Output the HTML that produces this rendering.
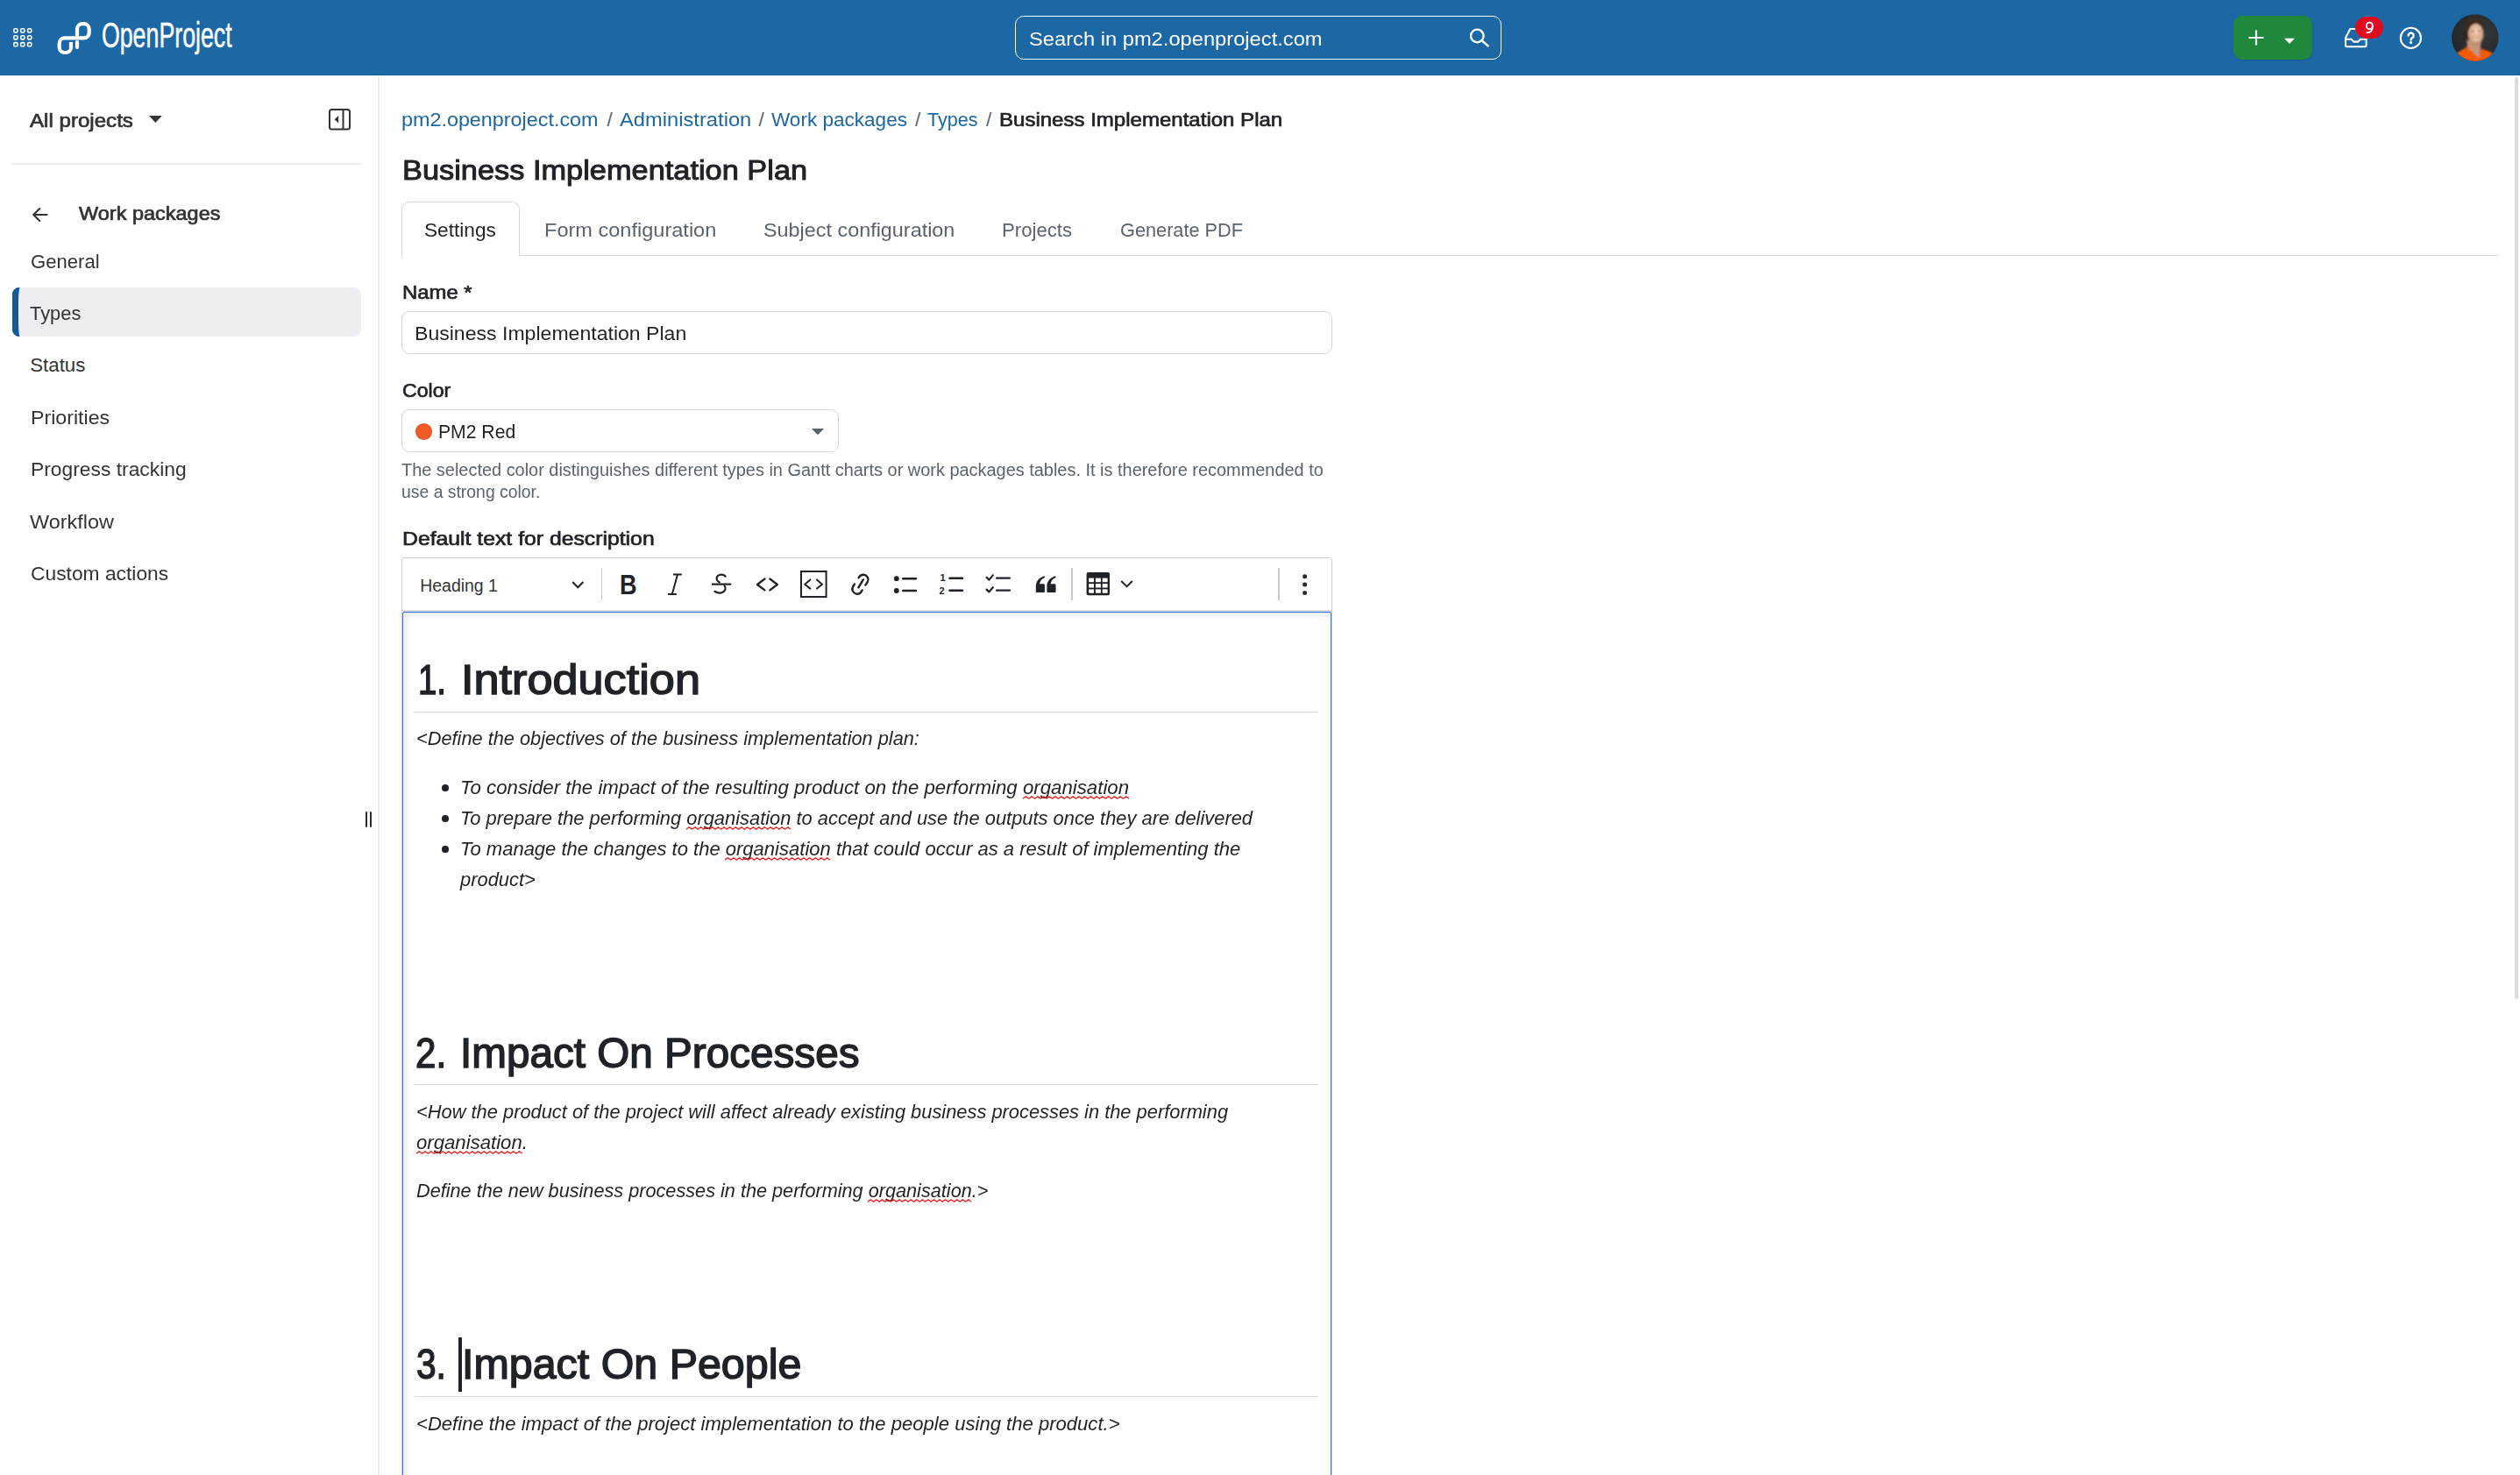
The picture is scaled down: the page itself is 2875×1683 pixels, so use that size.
<!DOCTYPE html><html><head><meta charset="utf-8"><title>OpenProject</title><style>html,body{margin:0;padding:0;width:2875px;height:1683px;overflow:hidden;background:#fff}body{position:relative;font-family:"Liberation Sans",sans-serif}.t{position:absolute;white-space:pre;line-height:1}svg{overflow:visible}</style></head><body><div style="position:absolute;left:0px;top:0px;width:2875px;height:86px;background:#1c68a5;box-shadow:0 0.6px 1.4px rgba(0,40,90,.35)"></div>
<div style="position:absolute;left:0px;top:85px;width:2875px;height:1px;background:#125c9c"></div>
<svg style="position:absolute;left:15px;top:32px;" width="23" height="23" viewBox="0 0 23 23"><rect x="0.8" y="0.8" width="4.2" height="4.2" rx="1.4" fill="none" stroke="#fff" stroke-width="1.6"/><rect x="0.8" y="8.7" width="4.2" height="4.2" rx="1.4" fill="none" stroke="#fff" stroke-width="1.6"/><rect x="0.8" y="16.6" width="4.2" height="4.2" rx="1.4" fill="none" stroke="#fff" stroke-width="1.6"/><rect x="8.7" y="0.8" width="4.2" height="4.2" rx="1.4" fill="none" stroke="#fff" stroke-width="1.6"/><rect x="8.7" y="8.7" width="4.2" height="4.2" rx="1.4" fill="none" stroke="#fff" stroke-width="1.6"/><rect x="8.7" y="16.6" width="4.2" height="4.2" rx="1.4" fill="none" stroke="#fff" stroke-width="1.6"/><rect x="16.6" y="0.8" width="4.2" height="4.2" rx="1.4" fill="none" stroke="#fff" stroke-width="1.6"/><rect x="16.6" y="8.7" width="4.2" height="4.2" rx="1.4" fill="none" stroke="#fff" stroke-width="1.6"/><rect x="16.6" y="16.6" width="4.2" height="4.2" rx="1.4" fill="none" stroke="#fff" stroke-width="1.6"/></svg>
<svg style="position:absolute;left:60px;top:20px;" width="50" height="50" viewBox="0 0 50 50"><g fill="none" stroke="#fff" stroke-width="4.2" stroke-linecap="butt" stroke-linejoin="round"><path d="M21 28 V34 A6 6 0 0 1 15 40 H13.7 A6 6 0 0 1 7.7 34 V29.4 A6 6 0 0 1 13.7 23.4 H35.7 A6 6 0 0 0 41.7 17.4 V13.2 A6 6 0 0 0 35.7 7.2 H34 A6 6 0 0 0 28 13.2 V23.4"/></g><path d="M28 28 V34" stroke="#fff" stroke-width="4.2" stroke-linecap="round"/></svg>
<svg style="position:absolute;left:110px;top:15px;" width="170" height="55" viewBox="0 0 170 55"><text x="5.9" y="39.2" font-family="Liberation Sans" font-size="41.5" fill="#fff" stroke="#fff" stroke-width="0.5" textLength="148.8" lengthAdjust="spacingAndGlyphs">OpenProject</text></svg>
<div style="position:absolute;left:1157.5px;top:18px;width:555px;height:49.5px;box-sizing:border-box;border:1.5px solid #fff;border-radius:10px"></div>
<div class="t" style="left:1174.4px;top:33.7px;font-size:22.39px;font-weight:400;font-style:normal;color:#fff;transform:scaleX(1.0591);transform-origin:0 0;">Search in pm2.openproject.com</div>
<svg style="position:absolute;left:1672px;top:28px;" width="32" height="30" viewBox="0 0 32 30"><circle cx="13.3" cy="13" r="7.3" fill="none" stroke="#fff" stroke-width="2.3"/><path d="M18.6 18.2 L25.6 24.4" stroke="#fff" stroke-width="2.5" stroke-linecap="round"/></svg>
<div style="position:absolute;left:2548.4px;top:18.2px;width:89.2px;height:49.5px;background:#1f883d;border-radius:10px;box-shadow:0 1px 2px rgba(0,0,0,.15)"></div>
<svg style="position:absolute;left:2564px;top:33px;" width="20" height="20" viewBox="0 0 20 20"><path d="M10 1.5 V18.5 M1.5 10 H18.5" stroke="#fff" stroke-width="2.2"/></svg>
<svg style="position:absolute;left:2605px;top:43px;" width="14" height="8" viewBox="0 0 14 8"><path d="M1 0.8 H13 L7 7 Z" fill="#fff"/></svg>
<svg style="position:absolute;left:2673px;top:30px;" width="32" height="27" viewBox="0 0 32 27"><g fill="none" stroke="#fff" stroke-width="2.1" stroke-linejoin="round"><path d="M8.2 3 H21 L26.6 13.2 V22 A1.3 1.3 0 0 1 25.3 23.3 H4.3 A1.3 1.3 0 0 1 3 22 V13.2 Z"/><path d="M3 14.8 H9.6 L12.2 17.6 H17.4 L20 14.8 H26.6"/></g></svg>
<div style="position:absolute;left:2686.8px;top:18.8px;width:32.6px;height:25.3px;background:#e00b1f;border-radius:13px"></div>
<svg style="position:absolute;left:2696px;top:23px;" width="14" height="18" viewBox="0 0 14 18"><ellipse cx="7.3" cy="6.4" rx="3.5" ry="3.8" fill="none" stroke="#fff" stroke-width="1.9"/><path d="M10.8 6.6 C10.9 11.8 9.2 14.3 3.6 14.4" fill="none" stroke="#fff" stroke-width="1.9"/></svg>
<svg style="position:absolute;left:2736px;top:29px;" width="29" height="29" viewBox="0 0 29 29"><circle cx="14.4" cy="14.4" r="11.6" fill="none" stroke="#fff" stroke-width="2.1"/><path d="M11.6 11.6 A3 3 0 1 1 16.2 14.1 C15 14.8 14.5 15.3 14.5 16.6" fill="none" stroke="#fff" stroke-width="2.4" stroke-linecap="round"/><circle cx="14.5" cy="19.6" r="1.6" fill="#fff"/></svg>
<svg style="position:absolute;left:2790px;top:10px;" width="70" height="66" viewBox="0 0 70 66"><defs><clipPath id="avc"><circle cx="33.8" cy="43.1" r="26.8" transform="translate(0,-10)"/></clipPath><radialGradient id="avbg" cx="0.6" cy="0.4" r="0.7"><stop offset="0" stop-color="#34373a"/><stop offset="1" stop-color="#1f2124"/></radialGradient><radialGradient id="avface" cx="0.5" cy="0.35" r="0.65"><stop offset="0" stop-color="#f0cdb8"/><stop offset="0.6" stop-color="#dcaa8c"/><stop offset="1" stop-color="#b98468"/></radialGradient><filter id="avbl" x="-20%" y="-20%" width="140%" height="140%"><feGaussianBlur stdDeviation="1"/></filter></defs><g clip-path="url(#avc)"><rect width="70" height="66" fill="url(#avbg)"/><g filter="url(#avbl)"><ellipse cx="32.6" cy="22.5" rx="11.4" ry="13" fill="#3a2a21"/><path d="M22 24 Q21 32 25 36 L27 30 Z" fill="#2e221c"/><path d="M24.5 36 L25 55 L39 56 L40.5 36 Z" fill="#c8957a"/><ellipse cx="34.6" cy="29.4" rx="8.8" ry="12.4" fill="url(#avface)"/><path d="M26 19 Q34 13.5 43 20.5 L43 14 Q34 7.5 24.5 13 Z" fill="#3a2a21"/><path d="M29.5 25.6 h3 M37 25.2 h3" stroke="#7a5a4e" stroke-width="1.1"/><path d="M31.5 35.2 Q35 36.8 38.5 35" stroke="#eadbd0" stroke-width="1.3" fill="none"/><path d="M3 64 L13 50.5 L24.5 43.5 L38.6 56.5 L40.5 45.5 L53 50 L64 62 L64 70 L3 70 Z" fill="#f25a06"/></g></g></svg>
<div style="position:absolute;left:2869.2px;top:88px;width:3.8px;height:1052px;background:#dadada;border-radius:2px"></div>
<div style="position:absolute;left:431px;top:86px;width:1.5px;height:1597px;background:#ebebeb"></div>
<div class="t" style="left:33.9px;top:126.8px;font-size:22.29px;font-weight:400;font-style:normal;color:#333333;transform:scaleX(1.0819);transform-origin:0 0;-webkit-text-stroke:0.71px #333333;">All projects</div>
<svg style="position:absolute;left:168px;top:130px;" width="19" height="12" viewBox="0 0 19 12"><path d="M2 2 H16.8 L9.4 10 Z" fill="#333"/></svg>
<svg style="position:absolute;left:373px;top:122px;" width="28" height="28" viewBox="0 0 28 28"><g fill="none" stroke="#333" stroke-width="2"><rect x="3" y="3" width="23" height="22.5" rx="2.5"/><path d="M18.5 3 V25.5"/></g><path d="M13.2 10 V18.6 L8.6 14.3 Z" fill="#333"/></svg>
<div style="position:absolute;left:14px;top:186px;width:398px;height:2px;background:#e8ebef"></div>
<svg style="position:absolute;left:34px;top:234px;" width="24" height="22" viewBox="0 0 24 22"><g fill="none" stroke="#333" stroke-width="2.1" stroke-linecap="round" stroke-linejoin="round"><path d="M19.5 11 H4.5 M11.3 4 L4.2 11 L11.3 18"/></g></svg>
<div class="t" style="left:90.2px;top:232.5px;font-size:22.29px;font-weight:400;font-style:normal;color:#333333;transform:scaleX(1.0541);transform-origin:0 0;-webkit-text-stroke:0.71px #333333;">Work packages</div>
<div style="position:absolute;left:14px;top:328px;width:398px;height:56px;background:#eceef1;border-radius:8px"></div>
<svg style="position:absolute;left:13px;top:328px;" width="12" height="56" viewBox="0 0 12 56"><path d="M9.6 0 C8.3 4 8 10 8 28 C8 46 8.3 52 9.6 56 H8.6 A7.6 7.6 0 0 1 1 48.4 V7.6 A7.6 7.6 0 0 1 8.6 0 Z" fill="#175a8f"/></svg>
<div class="t" style="left:34.5px;top:287.7px;font-size:22.29px;font-weight:400;font-style:normal;color:#333333;transform:scaleX(0.9920);transform-origin:0 0;">General</div>
<div class="t" style="left:34.2px;top:346.6px;font-size:22.29px;font-weight:400;font-style:normal;color:#333333;transform:scaleX(0.9815);transform-origin:0 0;">Types</div>
<div class="t" style="left:34.2px;top:406.0px;font-size:22.29px;font-weight:400;font-style:normal;color:#333333;">Status</div>
<div class="t" style="left:34.9px;top:465.8px;font-size:22.29px;font-weight:400;font-style:normal;color:#333333;transform:scaleX(1.0405);transform-origin:0 0;">Priorities</div>
<div class="t" style="left:34.9px;top:524.9px;font-size:22.29px;font-weight:400;font-style:normal;color:#333333;transform:scaleX(1.0249);transform-origin:0 0;">Progress tracking</div>
<div class="t" style="left:34.4px;top:585.0px;font-size:22.29px;font-weight:400;font-style:normal;color:#333333;transform:scaleX(1.0519);transform-origin:0 0;">Workflow</div>
<div class="t" style="left:34.6px;top:643.6px;font-size:22.29px;font-weight:400;font-style:normal;color:#333333;transform:scaleX(1.0238);transform-origin:0 0;">Custom actions</div>
<div style="position:absolute;left:417px;top:926px;width:2.2px;height:18px;background:#2b2b2b;border-radius:1px"></div>
<div style="position:absolute;left:421.8px;top:926px;width:2.2px;height:18px;background:#2b2b2b;border-radius:1px"></div>
<div class="t" style="left:458.3px;top:125.8px;font-size:22.08px;font-weight:400;font-style:normal;color:#1a67a3;transform:scaleX(1.0574);transform-origin:0 0;">pm2.openproject.com</div>
<div class="t" style="left:692.5px;top:125.5px;font-size:22.50px;font-weight:400;font-style:normal;color:#59636e;">/</div>
<div class="t" style="left:706.5px;top:125.8px;font-size:22.08px;font-weight:400;font-style:normal;color:#1a67a3;transform:scaleX(1.0745);transform-origin:0 0;">Administration</div>
<div class="t" style="left:865.5px;top:125.5px;font-size:22.50px;font-weight:400;font-style:normal;color:#59636e;">/</div>
<div class="t" style="left:879.6px;top:125.8px;font-size:22.08px;font-weight:400;font-style:normal;color:#1a67a3;transform:scaleX(1.0211);transform-origin:0 0;">Work packages</div>
<div class="t" style="left:1044.0px;top:125.5px;font-size:22.50px;font-weight:400;font-style:normal;color:#59636e;">/</div>
<div class="t" style="left:1058.3px;top:125.8px;font-size:22.08px;font-weight:400;font-style:normal;color:#1a67a3;transform:scaleX(0.9770);transform-origin:0 0;">Types</div>
<div class="t" style="left:1125.0px;top:125.5px;font-size:22.50px;font-weight:400;font-style:normal;color:#59636e;">/</div>
<div class="t" style="left:1140.0px;top:125.8px;font-size:22.08px;font-weight:400;font-style:normal;color:#1f2328;transform:scaleX(1.0883);transform-origin:0 0;-webkit-text-stroke:0.71px #1f2328;">Business Implementation Plan</div>
<div class="t" style="left:459.2px;top:178.3px;font-size:32.25px;font-weight:400;font-style:normal;color:#1f2328;transform:scaleX(1.0652);transform-origin:0 0;-webkit-text-stroke:1.03px #1f2328;">Business Implementation Plan</div>
<div style="position:absolute;left:457.5px;top:290.5px;width:2392px;height:1.5px;background:#d1d9e0"></div>
<div style="position:absolute;left:457.5px;top:230.4px;width:135.5px;height:62px;box-sizing:border-box;border:1.5px solid #d1d9e0;border-bottom:none;border-radius:9px 9px 0 0;background:#fff"></div>
<div class="t" style="left:484.4px;top:252.0px;font-size:22.29px;font-weight:400;font-style:normal;color:#1f2328;transform:scaleX(1.0166);transform-origin:0 0;">Settings</div>
<div class="t" style="left:620.7px;top:252.0px;font-size:22.29px;font-weight:400;font-style:normal;color:#59636e;transform:scaleX(1.0568);transform-origin:0 0;">Form configuration</div>
<div class="t" style="left:870.5px;top:252.0px;font-size:22.29px;font-weight:400;font-style:normal;color:#59636e;transform:scaleX(1.0492);transform-origin:0 0;">Subject configuration</div>
<div class="t" style="left:1143.3px;top:252.0px;font-size:22.29px;font-weight:400;font-style:normal;color:#59636e;transform:scaleX(0.9944);transform-origin:0 0;">Projects</div>
<div class="t" style="left:1277.8px;top:252.0px;font-size:22.29px;font-weight:400;font-style:normal;color:#59636e;transform:scaleX(0.9747);transform-origin:0 0;">Generate PDF</div>
<div class="t" style="left:458.6px;top:322.7px;font-size:22.59px;font-weight:400;font-style:normal;color:#1f2328;transform:scaleX(1.0577);transform-origin:0 0;-webkit-text-stroke:0.72px #1f2328;">Name *</div>
<div style="position:absolute;left:457.5px;top:354.6px;width:1062.5px;height:49.7px;box-sizing:border-box;border:1.5px solid #d1d9e0;border-radius:9px;background:#fff"></div>
<div class="t" style="left:472.6px;top:369.5px;font-size:22.29px;font-weight:400;font-style:normal;color:#1f2328;transform:scaleX(1.0352);transform-origin:0 0;">Business Implementation Plan</div>
<div class="t" style="left:458.6px;top:434.5px;font-size:22.59px;font-weight:400;font-style:normal;color:#1f2328;transform:scaleX(1.0222);transform-origin:0 0;-webkit-text-stroke:0.72px #1f2328;">Color</div>
<div style="position:absolute;left:457.5px;top:467.3px;width:499.5px;height:49.2px;box-sizing:border-box;border:1.5px solid #d1d9e0;border-radius:9px;background:#fff"></div>
<div style="position:absolute;left:474.3px;top:483.2px;width:18.8px;height:18.8px;background:#f05a24;border-radius:50%;box-shadow:inset 0 0 0 1px rgba(0,0,0,.08)"></div>
<div class="t" style="left:500.4px;top:481.6px;font-size:22.29px;font-weight:400;font-style:normal;color:#1f2328;transform:scaleX(0.9491);transform-origin:0 0;">PM2 Red</div>
<svg style="position:absolute;left:924px;top:487px;" width="18" height="11" viewBox="0 0 18 11"><path d="M1.8 2 H16.2 L9 9.2 Z" fill="#59636e"/></svg>
<div class="t" style="left:458.2px;top:526.3px;font-size:20.13px;font-weight:400;font-style:normal;color:#59636e;transform:scaleX(0.9909);transform-origin:0 0;">The selected color distinguishes different types in Gantt charts or work packages tables. It is therefore recommended to</div>
<div class="t" style="left:458.2px;top:551.2px;font-size:20.13px;font-weight:400;font-style:normal;color:#59636e;transform:scaleX(0.9638);transform-origin:0 0;">use a strong color.</div>
<div class="t" style="left:458.6px;top:603.6px;font-size:22.59px;font-weight:400;font-style:normal;color:#1f2328;transform:scaleX(1.0967);transform-origin:0 0;-webkit-text-stroke:0.72px #1f2328;">Default text for description</div>
<div style="position:absolute;left:457.6px;top:636.2px;width:1062.4px;height:1100px;box-sizing:border-box;border:1.3px solid #c9ccd1;border-radius:3px 3px 0 0;background:#fff"></div>
<div style="position:absolute;left:458.8px;top:696.2px;width:1060px;height:1.8px;background:linear-gradient(#e2e2e2,#c8ccd2)"></div>
<div class="t" style="left:479.3px;top:658.9px;font-size:19.43px;font-weight:400;font-style:normal;color:#333;">Heading 1</div>
<svg style="position:absolute;left:650px;top:660px;" width="19" height="14" viewBox="0 0 19 14"><path d="M3.2 4 L9.3 10.2 L15.4 4" fill="none" stroke="#1f2328" stroke-width="2"/></svg>
<div style="position:absolute;left:685.8px;top:648.3px;width:1.5px;height:36.3px;background:#c8c8c8"></div>
<svg style="position:absolute;left:704px;top:652px;" width="26" height="30" viewBox="0 0 26 30"><text x="2.9" y="26" font-family="Liberation Sans" font-weight="700" font-size="32" fill="#1f2328" textLength="19.6" lengthAdjust="spacingAndGlyphs">B</text></svg>
<svg style="position:absolute;left:758px;top:652px;" width="24" height="30" viewBox="0 0 24 30"><g stroke="#1f2328" stroke-width="2" fill="none"><path d="M10 3.6 H19.8 M4 26 H13.8 M15 3.6 L8.8 26"/></g></svg>
<svg style="position:absolute;left:810px;top:652px;" width="28" height="30" viewBox="0 0 28 30"><g fill="none" stroke="#1f2328" stroke-width="2.2" stroke-linecap="round"><path d="M17.6 5.6 C15.8 3.8 13 3.3 10.8 4 C8 4.8 7 7.4 8 9.6 C8.6 11 9.6 11.8 10.8 12.5"/><path d="M16.6 16.4 C17.8 18 17.8 20.8 16.2 22.6 C14 25 9.6 25.4 5.4 22.8"/></g><path d="M2 14.6 H24.2" stroke="#1f2328" stroke-width="2.2"/></svg>
<svg style="position:absolute;left:860px;top:656px;" width="30" height="22" viewBox="0 0 30 22"><g fill="none" stroke="#1f2328" stroke-width="2.2" stroke-linecap="round" stroke-linejoin="round"><path d="M12.5 4.5 L3.9 11 L12.5 17.4 M18.3 4.5 L26.9 11 L18.3 17.4"/></g></svg>
<svg style="position:absolute;left:911px;top:649px;" width="35" height="35" viewBox="0 0 35 35"><rect x="3" y="3" width="28.6" height="29" fill="none" stroke="#1f2328" stroke-width="2"/><g fill="none" stroke="#1f2328" stroke-width="2" stroke-linecap="round" stroke-linejoin="round"><path d="M13.4 12.4 L7.2 17.7 L13.4 22.6 M21 12.4 L27 17.7 L21 22.6"/></g></svg>
<svg style="position:absolute;left:967px;top:651px;" width="30" height="31" viewBox="0 0 30 31"><g fill="none" stroke="#1f2328" stroke-width="2.4" stroke-linecap="round"><path d="M12.6 8.2 C13.8 6 15.8 4.6 18.6 4.8 C22.6 5.4 24.6 9.6 22.8 13 L20.4 16.6"/><path d="M16.6 22.4 C15.2 25.6 12.6 27 10 26.6 C6 25.8 4.2 21.6 6.2 18.2 L8 15.4"/><path d="M17.8 10.4 L12.4 19.4"/></g></svg>
<svg style="position:absolute;left:1017px;top:652px;" width="32" height="28" viewBox="0 0 32 28"><circle cx="5.8" cy="8.2" r="2.9" fill="#1f2328"/><circle cx="5.8" cy="22" r="2.9" fill="#1f2328"/><g stroke="#1f2328" stroke-width="2.4" stroke-linecap="round"><path d="M13.2 8.2 H28"/><path d="M13.2 22 H28"/></g></svg>
<svg style="position:absolute;left:1070px;top:652px;" width="32" height="30" viewBox="0 0 32 30"><text x="2.6" y="11" font-family="Liberation Sans" font-weight="700" font-size="11" fill="#1f2328">1</text><text x="1.6" y="26.4" font-family="Liberation Sans" font-weight="700" font-size="11" fill="#1f2328">2</text><g stroke="#1f2328" stroke-width="2.4" stroke-linecap="round"><path d="M13.4 7.8 H28"/><path d="M13.4 21.8 H28"/></g></svg>
<svg style="position:absolute;left:1122px;top:652px;" width="34" height="28" viewBox="0 0 34 28"><g fill="none" stroke="#1f2328" stroke-width="2.2" stroke-linecap="round" stroke-linejoin="round"><path d="M3.6 6.8 L6.4 9.6 L10.8 4.4"/><path d="M3.6 20.6 L6.4 23.4 L10.8 18.2"/><path d="M15 7.6 H30"/><path d="M15 21.6 H30"/></g></svg>
<svg style="position:absolute;left:1179px;top:654px;" width="28" height="26" viewBox="0 0 28 26"><path d="M12.9 3.2 C7.6 4.3 2.8 8.6 2.8 14.6 V20.9 A1.2 1.2 0 0 0 4 22.1 H11.7 A1.2 1.2 0 0 0 12.9 20.9 V13.5 A1.2 1.2 0 0 0 11.7 12.3 H7 C7.5 9 9.6 6.2 12.9 5 Z M25.5 3.2 C20.2 4.3 15.4 8.6 15.4 14.6 V20.9 A1.2 1.2 0 0 0 16.6 22.1 H24.3 A1.2 1.2 0 0 0 25.5 20.9 V13.5 A1.2 1.2 0 0 0 24.3 12.3 H19.6 C20.1 9 22.2 6.2 25.5 5 Z" fill="#1f2328"/></svg>
<div style="position:absolute;left:1222.3px;top:647.7px;width:1.5px;height:37.2px;background:#c8c8c8"></div>
<svg style="position:absolute;left:1237px;top:651px;" width="32" height="31" viewBox="0 0 32 31"><rect x="2.6" y="2" width="26.4" height="26.2" rx="2" fill="#1f2328"/><g fill="#fff"><rect x="5.2" y="8.6" width="5.8" height="4.6"/><rect x="12.9" y="8.6" width="6" height="4.6"/><rect x="20.7" y="8.6" width="5.9" height="4.6"/><rect x="5.2" y="15.1" width="5.8" height="4.4"/><rect x="12.9" y="15.1" width="6" height="4.4"/><rect x="20.7" y="15.1" width="5.9" height="4.4"/><rect x="5.2" y="21.4" width="5.8" height="4.3"/><rect x="12.9" y="21.4" width="6" height="4.3"/><rect x="20.7" y="21.4" width="5.9" height="4.3"/></g></svg>
<svg style="position:absolute;left:1276px;top:659px;" width="19" height="14" viewBox="0 0 19 14"><path d="M3.2 4 L9.6 10.2 L15.8 4" fill="none" stroke="#1f2328" stroke-width="2"/></svg>
<div style="position:absolute;left:1458.2px;top:647.6px;width:1.5px;height:37.4px;background:#c8c8c8"></div>
<svg style="position:absolute;left:1482px;top:652px;" width="12" height="30" viewBox="0 0 12 30"><circle cx="6.6" cy="5.8" r="2.5" fill="#2b2b2b"/><circle cx="6.6" cy="15.1" r="2.5" fill="#2b2b2b"/><circle cx="6.6" cy="24.5" r="2.5" fill="#2b2b2b"/></svg>
<div style="position:absolute;left:459px;top:697.8px;width:1060px;height:1100px;box-sizing:border-box;border:1.5px solid #3377e8;border-radius:2px 2px 0 0;background:#fff;box-shadow:inset 3px 3px 8px rgba(0,0,0,.1)"></div>
<div class="t" style="left:476.7px;top:751.7px;font-size:47.86px;font-weight:400;font-style:normal;color:#1f2328;transform:scaleX(0.8008);transform-origin:0 0;-webkit-text-stroke:1.53px #1f2328;">1.</div>
<div class="t" style="left:525.5px;top:751.7px;font-size:47.86px;font-weight:400;font-style:normal;color:#1f2328;transform:scaleX(1.0913);transform-origin:0 0;-webkit-text-stroke:1.53px #1f2328;">Introduction</div>
<div style="position:absolute;left:473px;top:811.7px;width:1031px;height:1.2px;background:#d3dae1"></div>
<div class="t" style="left:474.6px;top:831.8px;font-size:22.39px;font-weight:400;font-style:italic;color:#1f2328;transform:scaleX(0.9724);transform-origin:0 0;">&lt;Define the objectives of the business implementation plan:</div>
<div style="position:absolute;left:504.4px;top:895.2px;width:7.7px;height:7.7px;background:#1f2328;border-radius:50%"></div>
<div style="position:absolute;left:504.4px;top:930.3000000000001px;width:7.7px;height:7.7px;background:#1f2328;border-radius:50%"></div>
<div style="position:absolute;left:504.4px;top:965.4px;width:7.7px;height:7.7px;background:#1f2328;border-radius:50%"></div>
<div class="t" style="left:524.6px;top:887.7px;font-size:22.39px;font-weight:400;font-style:italic;color:#1f2328;transform:scaleX(0.9938);transform-origin:0 0;">To consider the impact of the resulting product on the performing <span class="org">organisation</span></div>
<div class="t" style="left:524.6px;top:922.9px;font-size:22.39px;font-weight:400;font-style:italic;color:#1f2328;transform:scaleX(0.9777);transform-origin:0 0;">To prepare the performing <span class="org">organisation</span> to accept and use the outputs once they are delivered</div>
<div class="t" style="left:524.6px;top:958.1px;font-size:22.39px;font-weight:400;font-style:italic;color:#1f2328;transform:scaleX(0.9841);transform-origin:0 0;">To manage the changes to the <span class="org">organisation</span> that could occur as a result of implementing the</div>
<div class="t" style="left:525.1px;top:992.5px;font-size:22.39px;font-weight:400;font-style:italic;color:#1f2328;transform:scaleX(0.9782);transform-origin:0 0;">product&gt;</div>
<div class="t" style="left:474.2px;top:1177.9px;font-size:47.86px;font-weight:400;font-style:normal;color:#1f2328;transform:scaleX(0.8783);transform-origin:0 0;-webkit-text-stroke:1.53px #1f2328;">2.</div>
<div class="t" style="left:525.0px;top:1177.9px;font-size:47.86px;font-weight:400;font-style:normal;color:#1f2328;transform:scaleX(0.9956);transform-origin:0 0;-webkit-text-stroke:1.53px #1f2328;">Impact On Processes</div>
<div style="position:absolute;left:473px;top:1237.2px;width:1031px;height:1.2px;background:#d3dae1"></div>
<div class="t" style="left:474.6px;top:1257.7px;font-size:22.39px;font-weight:400;font-style:italic;color:#1f2328;transform:scaleX(0.9765);transform-origin:0 0;">&lt;How the product of the project will affect already existing business processes in the performing</div>
<div class="t" style="left:474.6px;top:1292.9px;font-size:22.39px;font-weight:400;font-style:italic;color:#1f2328;transform:scaleX(0.9908);transform-origin:0 0;"><span class="org">organisation</span>.</div>
<div class="t" style="left:474.6px;top:1348.3px;font-size:22.39px;font-weight:400;font-style:italic;color:#1f2328;transform:scaleX(0.9687);transform-origin:0 0;">Define the new business processes in the performing <span class="org">organisation</span>.&gt;</div>
<div class="t" style="left:474.9px;top:1533.0px;font-size:47.86px;font-weight:400;font-style:normal;color:#1f2328;transform:scaleX(0.8483);transform-origin:0 0;-webkit-text-stroke:1.53px #1f2328;">3.</div>
<div class="t" style="left:526.5px;top:1533.0px;font-size:47.86px;font-weight:400;font-style:normal;color:#1f2328;transform:scaleX(1.0110);transform-origin:0 0;-webkit-text-stroke:1.53px #1f2328;">Impact On People</div>
<div style="position:absolute;left:473px;top:1592.9px;width:1031px;height:1.2px;background:#d3dae1"></div>
<div style="position:absolute;left:523.1px;top:1526px;width:3.8px;height:61.6px;background:#1f2328"></div>
<div class="t" style="left:474.6px;top:1613.9px;font-size:22.39px;font-weight:400;font-style:italic;color:#1f2328;transform:scaleX(0.9866);transform-origin:0 0;">&lt;Define the impact of the project implementation to the people using the product.&gt;</div>
<svg style="position:absolute;left:1166.5px;top:906.8px" width="123.2" height="6"><path d="M0 0 L3.37 -2.40 L6.73 0 L10.10 -2.40 L13.46 0 L16.83 -2.40 L20.19 0 L23.56 -2.40 L26.92 0 L30.29 -2.40 L33.65 0 L37.02 -2.40 L40.38 0 L43.75 -2.40 L47.11 0 L50.48 -2.40 L53.84 0 L57.21 -2.40 L60.58 0 L63.94 -2.40 L67.31 0 L70.67 -2.40 L74.04 0 L77.40 -2.40 L80.77 0 L84.13 -2.40 L87.50 0 L90.86 -2.40 L94.23 0 L97.59 -2.40 L100.96 0 L104.32 -2.40 L107.69 0 L111.05 -2.40 L114.42 0 L117.79 -2.40 L121.15 0" transform="translate(0,4.2)" fill="none" stroke="#ee1111" stroke-width="1.2" stroke-linejoin="round"/></svg>
<svg style="position:absolute;left:782.8px;top:941.9px" width="121.2" height="6"><path d="M0 0 L3.31 -2.40 L6.62 0 L9.93 -2.40 L13.24 0 L16.55 -2.40 L19.86 0 L23.18 -2.40 L26.49 0 L29.80 -2.40 L33.11 0 L36.42 -2.40 L39.73 0 L43.04 -2.40 L46.35 0 L49.66 -2.40 L52.97 0 L56.28 -2.40 L59.59 0 L62.90 -2.40 L66.22 0 L69.53 -2.40 L72.84 0 L76.15 -2.40 L79.46 0 L82.77 -2.40 L86.08 0 L89.39 -2.40 L92.70 0 L96.01 -2.40 L99.32 0 L102.63 -2.40 L105.94 0 L109.26 -2.40 L112.57 0 L115.88 -2.40 L119.19 0" transform="translate(0,4.2)" fill="none" stroke="#ee1111" stroke-width="1.2" stroke-linejoin="round"/></svg>
<svg style="position:absolute;left:827.4px;top:977.0px" width="122.0" height="6"><path d="M0 0 L3.33 -2.40 L6.66 0 L10.00 -2.40 L13.33 0 L16.66 -2.40 L19.99 0 L23.33 -2.40 L26.66 0 L29.99 -2.40 L33.32 0 L36.66 -2.40 L39.99 0 L43.32 -2.40 L46.65 0 L49.99 -2.40 L53.32 0 L56.65 -2.40 L59.98 0 L63.32 -2.40 L66.65 0 L69.98 -2.40 L73.31 0 L76.65 -2.40 L79.98 0 L83.31 -2.40 L86.64 0 L89.98 -2.40 L93.31 0 L96.64 -2.40 L99.97 0 L103.31 -2.40 L106.64 0 L109.97 -2.40 L113.30 0 L116.64 -2.40 L119.97 0" transform="translate(0,4.2)" fill="none" stroke="#ee1111" stroke-width="1.2" stroke-linejoin="round"/></svg>
<svg style="position:absolute;left:474.6px;top:1311.9px" width="122.8" height="6"><path d="M0 0 L3.36 -2.40 L6.71 0 L10.07 -2.40 L13.42 0 L16.78 -2.40 L20.13 0 L23.49 -2.40 L26.84 0 L30.20 -2.40 L33.55 0 L36.91 -2.40 L40.26 0 L43.62 -2.40 L46.97 0 L50.33 -2.40 L53.68 0 L57.04 -2.40 L60.39 0 L63.75 -2.40 L67.10 0 L70.46 -2.40 L73.81 0 L77.17 -2.40 L80.52 0 L83.88 -2.40 L87.23 0 L90.59 -2.40 L93.94 0 L97.30 -2.40 L100.65 0 L104.01 -2.40 L107.36 0 L110.72 -2.40 L114.07 0 L117.43 -2.40 L120.78 0" transform="translate(0,4.2)" fill="none" stroke="#ee1111" stroke-width="1.2" stroke-linejoin="round"/></svg>
<svg style="position:absolute;left:990.3px;top:1367.1px" width="120.1" height="6"><path d="M0 0 L3.28 -2.40 L6.56 0 L9.84 -2.40 L13.12 0 L16.40 -2.40 L19.68 0 L22.96 -2.40 L26.24 0 L29.52 -2.40 L32.80 0 L36.08 -2.40 L39.36 0 L42.64 -2.40 L45.92 0 L49.20 -2.40 L52.48 0 L55.76 -2.40 L59.05 0 L62.33 -2.40 L65.61 0 L68.89 -2.40 L72.17 0 L75.45 -2.40 L78.73 0 L82.01 -2.40 L85.29 0 L88.57 -2.40 L91.85 0 L95.13 -2.40 L98.41 0 L101.69 -2.40 L104.97 0 L108.25 -2.40 L111.53 0 L114.81 -2.40 L118.09 0" transform="translate(0,4.2)" fill="none" stroke="#ee1111" stroke-width="1.2" stroke-linejoin="round"/></svg></body></html>
